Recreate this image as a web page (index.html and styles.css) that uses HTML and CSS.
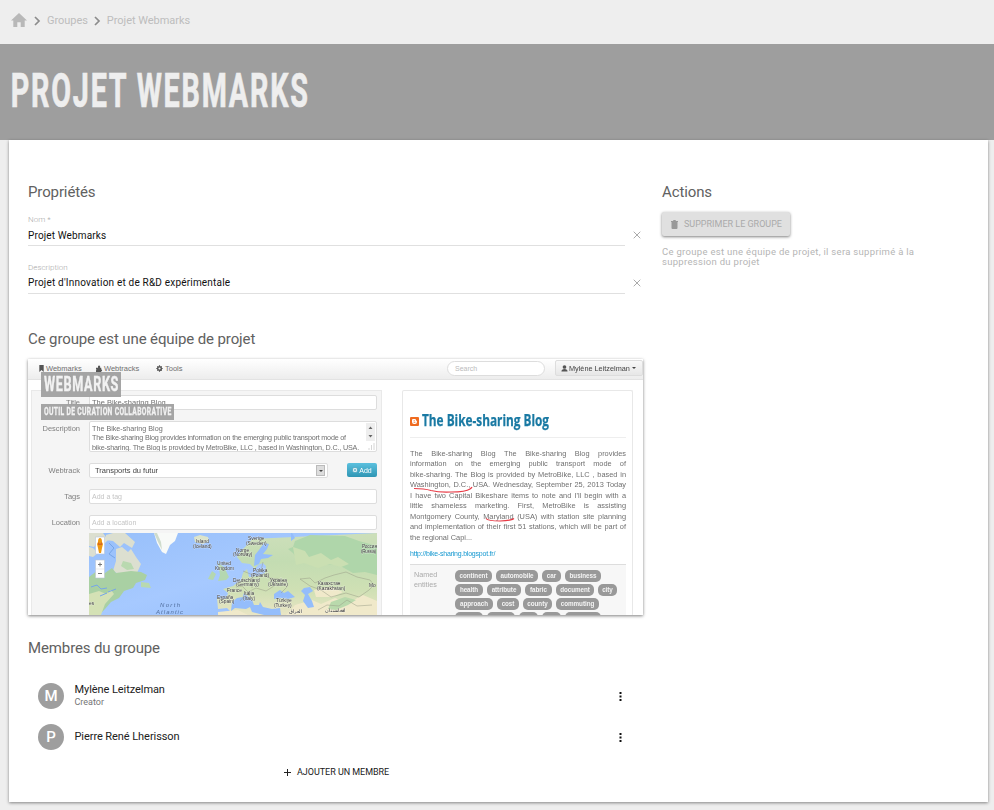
FILE: index.html
```html
<!DOCTYPE html>
<html lang="fr">
<head>
<meta charset="utf-8">
<title>Projet Webmarks</title>
<link rel="stylesheet" href="styles.css">
</head>
<body>
<nav class="crumbs">
  <svg class="home" viewBox="0 0 16 14"><path d="M8 0 0 7.5h2.3V14h4V9.2h3.4V14h4V7.5H16z"/></svg>
  <svg class="chev" viewBox="0 0 7 10"><path d="m1 1 4 4-4 4"/></svg>
  <span class="c1">Groupes</span>
  <svg class="chev" viewBox="0 0 7 10"><path d="m1 1 4 4-4 4"/></svg>
  <span class="c2">Projet Webmarks</span>
</nav>
<header class="hero">
  <h1><svg class="hero-title" viewBox="0 0 310 50"><text x="0.7" y="35" textLength="299" lengthAdjust="spacingAndGlyphs">PROJET WEBMARKS</text></svg></h1>
</header>
<main class="card">
  <div class="left">
    <h2>Propriétés</h2>
    <div class="field f1">
      <div class="control"><label>Nom *</label><span class="value v1">Projet Webmarks</span></div>
      <svg class="clear" viewBox="0 0 8 8"><path d="m.7.7 6.6 6.6M7.3.7.7 7.3"/></svg>
    </div>
    <div class="field f2">
      <div class="control"><label class="l2">Description</label><span class="value v2">Projet d'Innovation et de R&amp;D expérimentale</span></div>
      <svg class="clear" viewBox="0 0 8 8"><path d="m.7.7 6.6 6.6M7.3.7.7 7.3"/></svg>
    </div>
    <h2 class="team">Ce groupe est une équipe de projet</h2>
    <section class="preview">
      <div class="shot">
        <div class="topbar">
          <span class="nav n1"><svg viewBox="0 0 8 8"><path d="M1.5 0h5v8L4 5.8 1.5 8z"/></svg>Webmarks</span>
          <span class="nav n2"><svg viewBox="0 0 8 8"><path d="M0 3h2.3V1.5a1.3 1.3 0 0 1 2.4 0V3H6v2a1 1 0 1 1 0 2v1H0V6l1-.5L0 5z"/></svg>Webtracks</span>
          <span class="nav n3"><svg class="gear" viewBox="0 0 8 8"><circle class="ring" cx="4" cy="4" r="2.1"/><path class="teeth" d="M4 .4v1M4 6.600v1M.4 4h1M6.600 4h1M1.500 1.500l.7.7M5.800 5.800l.7.7M1.500 6.500l.7-.7M5.800 2.200l.7-.7"/></svg>Tools</span>
          <span class="search">Search</span>
          <span class="user"><svg viewBox="0 0 8 8"><circle cx="4" cy="2.3" r="2.1"/><path d="M.5 7.5q0-3 3.5-3t3.5 3z"/></svg><span>Mylène Leitzelman</span><i class="caret"></i></span>
        </div>
        <div class="columns">
          <div class="form">
            <div class="row r-title"><b>Title</b><span class="input">The Bike-sharing Blog</span></div>
            <div class="row r-desc"><b>Description</b>
              <div class="input area"><p>The Bike-sharing Blog</p><p class="a2">The Bike-sharing Blog provides information on the emerging public transport mode of</p><p class="a3">bike-sharing. The Blog is provided by MetroBike, LLC , based in Washington, D.C., USA.</p>
                <svg class="scroll" viewBox="0 0 10 28"><path class="track" d="M1 0h9v18H1z"/><path d="m3.5 6 2-2.5 2 2.5zM3.5 12l2 2.5 2-2.5z"/><path class="grip" d="M9 20v7M6.5 22v5M4 25v2"/></svg></div></div>
            <div class="row r-track"><b>Webtrack</b><span class="input select"><span>Transports du futur</span><i class="drop"><i class="caret"></i></i></span><span class="add"><svg viewBox="0 0 8 8"><circle cx="4" cy="4" r="3.6"/><path d="M4 2v4M2 4h4"/></svg>Add</span></div>
            <div class="row r-tags"><b>Tags</b><span class="input hint">Add a tag</span></div>
            <div class="row r-loc"><b>Location</b><span class="input hint">Add a location</span></div>
            <svg class="map" viewBox="0 0 288 82">
              <defs>
                <linearGradient id="sea" x1="0" y1="0" x2="1" y2="1"><stop offset="0" stop-color="#97bffa"/><stop offset=".5" stop-color="#a6c9ff"/><stop offset="1" stop-color="#94bdfb"/></linearGradient>
                <linearGradient id="land" x1="0" y1="0" x2="0" y2="1"><stop offset="0" stop-color="#cddfba"/><stop offset=".35" stop-color="#c3dcb2"/><stop offset=".7" stop-color="#cfe0b4"/><stop offset="1" stop-color="#e9e5c4"/></linearGradient>
              </defs>
              <path fill="url(#sea)" d="M0 0h288v82H0z"/>
              <path fill="#dcdfd0" d="M0 0h14l5 7-5 5-6-3-3 5-5-1zM17 2l7-2h12l10 9-3 6-8-5-4 4-7-6-7-1zM27 16l6-2 6 5 3-3 5 8 5 7-4 9-10-1-5 4-9-5 3-10zM0 14l4 1 5 5-5 4-4-1z"/>
              <path fill="#a9d0a3" d="M0 44l9-7 7 3 7-5 4 5 15-2 10 1 6 3-2 5-9 3-3 5-9 3-5 7-8 4-6 7-6 6H0z"/>
              <path fill="#d4e1b5" d="M0 61l10-3 7 3 5-4 3 4-9 10-4 11H0z"/>
              <path fill="#b9d9b0" d="m52 49 8 1 2 5-10-1zM34 28l8 2 3 6-7 1-6-4z"/>
              <path fill="none" stroke="#76a6e8" d="m2 54 6-2 4 4 6-1M11 63l7-3M19 59l8-3M20 10l5 5-5 6 6 4"/>
              <path fill="#f8faf8" d="M65 0h24l-3 8-5 4-4 9-4-2-5-9z"/><path fill="#cfdccc" d="m65 0 4 9 4 8-1-8-4-9z"/>
              <path fill="#dce4ca" d="m105 4 6-2 8 2 1 4-6 3-8-2z"/>
              <path fill="url(#land)" d="M288 0v82H129v-2l12-2-3-3-9 1-1-11 9 1 2-6-5-4 10-3 8-6 2-7 4-4 2 8 9-1 7-3 1-7-3-3-5 2-3 4-5-5-8-1-5-6 5-7 5-5 5-6z"/>
              <path fill="#b4d7b0" d="m129 30 6 4 5 10-3 3-8 1 2-6zM123 38l4 3-3 6-5-1z"/>
              <path fill="#afd6aa" d="m206 8 15-6 35 1 14 5 18 5v29l-12-3-12 1-16-9-17 1-8-6-14 1-5-7-5-4 5-2z"/>
              <path fill="#cadfb2" d="m204 14 12 4 4 6 12-4 10 7 7-3 11 7-8 3-11-3-12 4-14-5-8 2z"/>
              <path fill="#f0e9ca" d="m206 72 17-5 9 4 14-6 13 5 15-8 14 6v14h-91zM225 57l17-3 12 5-10 5h-17zM129 79l20-2 10 5h-30z"/>
              <path fill="#b9d9ac" d="m242 69 14-5 11 3-8 5-12 5-8-1z"/>
              <path fill="#94bdfb" d="m175 10 5 1-2 5-4 5 10 1-5 3-7 1-2 5-5 2 1-11 4-5zM143 69l5-4 6-1 7 10-4 2-11-1-4 3zM155 60l8 7 2 5 5 0 1-3 3 5 9 2 8-1 1 7h-17l-12-3-2-5-8-8zM185 61l6-4 4 3 4-2 7 6-7 2-8-1-6 1zM215 55l6-1 3 4-5 3 4 7 2 6-6 1-5-7 2-6-4-4zM203 0l3 5-4 3v-8z"/>
              <path fill="none" stroke="#999c87" stroke-width=".5" d="m154 38 10 4 8-4 9 7 4 8-8 5-10-3-8 4-6-6-6 1M164 42l-1 13M172 38l2-9M181 45l9 1 8 8-6 6M211 46l10-1 5 5 10-5 9-3 12-3 11 5 13 3 4 5-5 5-10 7-13-4-15 4-10-7-11-4zM229 77l9-5 12 1 8-6 10 6 15-1M151 68l6-7 5 2M177 17"/>
              <g class="cities">
                <text x="107" y="10">Island</text><text x="104" y="14.5">(Iceland)</text>
                <text x="128" y="32">United</text><text x="126" y="36.5">Kingdom</text>
                <text x="147" y="18.500">Norge</text><text x="144" y="23">(Norway)</text>
                <text x="159" y="6.5">Sverige</text><text x="157" y="11.5">(Sweden)</text>
                <text x="164" y="39">Polska</text><text x="162" y="43.500">(Poland)</text>
                <text x="144" y="48.500">Deutschland</text><text x="147" y="53">(Germany)</text>
                <text x="138" y="58.500">France</text><text x="128" y="65.500">España</text><text x="130" y="70">(Spain)</text>
                <text x="155" y="62">Italia</text><text x="154" y="66.500">(Italy)</text>
                <text x="181" y="48.500">Україна</text><text x="179" y="53">(Ukraine)</text>
                <text x="187" y="69">Türkiye</text><text x="185" y="74">(Turkey)</text>
                <text x="229" y="52">Казахстан</text><text x="228" y="56.500">(Kazakhstan)</text>
                <text x="273" y="14.5" textLength="15">Россия</text><text x="272" y="19.5" textLength="15">(Russia)</text><text x="280" y="54">Мо</text><text x="0" y="71.500">es</text>
                <text x="200" y="80">العراق</text><text x="236" y="79">افغانستان</text>
              </g>
              <g class="ocean"><text x="71" y="74" textLength="20">North</text><text x="67" y="80.500" textLength="27">Atlantic</text></g>
              <path fill="#fff" stroke="#b9c5d5" stroke-width=".6" d="M6.5 4h9v17h-9zM6.5 27h9v18h-9z"/>
              <path fill="#ee9910" d="M9 9q0-4 2-4t2 4l1 2-1 4-1 5h-2l-1-5-1-4z"/><path fill="#d66723" d="m9 9 2 2 2-2v3H9z"/>
              <path fill="none" stroke="#777" d="M9 31.5h4M11 29.5v4M9 40.5h4"/><path stroke="#ddd" stroke-width=".6" d="M7 36h8"/>
            </svg>
          </div>
          <article class="blog">
            <h3><svg class="blogger" viewBox="0 0 9 9"><rect width="9" height="9" rx="1"/><path class="mark" d="M3 2h2q1.200 0 1.200 1.500.8.400.8 1.200 0 2.300-2 2.300H4Q2 7 2 5V3.300Q2 2 3 2z"/><path class="slit" d="M3.600 3.700h1.200M3.600 5.300h1.800"/></svg><svg class="blog-title" viewBox="0 0 128 20"><text x="0" y="15.500" textLength="127" lengthAdjust="spacingAndGlyphs">The Bike-sharing Blog</text></svg></h3>
            <div class="story">
              <p>The Bike-sharing Blog The Bike-sharing Blog provides</p><p>information on the emerging public transport mode of</p><p>bike-sharing. The Blog is provided by MetroBike, LLC , based in</p><p>Washington, D.C., USA. Wednesday, September 25, 2013 Today</p><p>I have two Capital Bikeshare items to note and I'll begin with a</p><p>little shameless marketing. First, MetroBike is assisting</p><p>Montgomery County, Maryland (USA) with station site planning</p><p>and implementation of their first 51 stations, which will be part of</p><p class="last">the regional Capi...</p>
              <svg class="marks" viewBox="0 0 216 95"><path d="M4 39.500q10 0 17 2 8 2 20 1.500 15 0 19-3 1.500-1 2-2M76 69.500q2 2.500 14 2.500 12-.5 14-2.500"/></svg>
            </div>
            <a>http://bike-sharing.blogspot.fr/</a>
            <div class="entities"><div class="ent-label">Named<br>entities</div>
              <div class="tags">
                <div><span class="w37">continent</span><span class="w42">automobile</span><span class="w19">car</span><span class="w36">business</span></div>
                <div><span class="w28">health</span><span class="w34">attribute</span><span class="w27">fabric</span><span class="w38">document</span><span class="w19">city</span></div>
                <div><span class="w38">approach</span><span class="w22">cost</span><span class="w29">county</span><span class="w43">commuting</span></div>
                <div><span class="w28"></span><span class="w28"></span><span class="w19"></span><span class="w19"></span><span class="w36"></span></div>
              </div>
            </div>
          </article>
        </div>
      </div>
      <div class="captions">
        <svg class="cap1" viewBox="0 0 80 25"><text x="3" y="18.800" textLength="75" lengthAdjust="spacingAndGlyphs">WEBMARKS</text></svg>
        <svg class="cap2" viewBox="0 0 133 16"><text x="3" y="11.300" textLength="127.500" lengthAdjust="spacingAndGlyphs">OUTIL DE CURATION COLLABORATIVE</text></svg>
      </div>
    </section>
    <h2 class="members-title">Membres du groupe</h2>
    <ul class="members">
      <li><span class="avatar">M</span><div class="who"><span class="name">Mylène Leitzelman</span><small>Creator</small></div><svg class="more" viewBox="0 0 3 9"><path d="M.5 0h2v2h-2zM.5 3.500h2v2h-2zM.5 7h2v2h-2z"/></svg></li>
      <li><span class="avatar">P</span><div class="who"><span class="name n-p">Pierre René Lherisson</span></div><svg class="more" viewBox="0 0 3 9"><path d="M.5 0h2v2h-2zM.5 3.500h2v2h-2zM.5 7h2v2h-2z"/></svg></li>
    </ul>
    <div class="add-member"><svg viewBox="0 0 7 7"><path d="M3.500 0v7M0 3.500h7"/></svg><span>AJOUTER UN MEMBRE</span></div>
  </div>
  <aside class="right">
    <h2>Actions</h2>
    <button class="delete" disabled><svg viewBox="0 0 7 9"><path d="M0 1h2l.5-1h2L5 1h2v1H0zM.5 2h6v6q0 1-1 1h-4q-1 0-1-1z"/></svg><span>SUPPRIMER LE GROUPE</span></button>
    <p class="note"><span>Ce groupe est une équipe de projet, il sera supprimé à la</span><br><span class="note2">suppression du projet</span></p>
  </aside>
</main>
</body>
</html>
```
FILE: styles.css
```css
* { box-sizing: border-box; }
body { margin: 0; height: 810px; overflow: hidden; background: #eee; font-family: Roboto, sans-serif; color: #212121; }
h1, h2, h3, p, ul { margin: 0; padding: 0; font-weight: 400; }
svg { display: block; flex: none; }

.crumbs { height: 44px; padding: 0 0 4px 11px; display: flex; align-items: center; font-size: 11px; letter-spacing: -.04px; color: #bdbdbd; }
.home { width: 16px; height: 14px; fill: #b8b8b8; }
.chev { width: 7px; height: 10px; margin: 2px 6px 0 6px; fill: none; stroke: #8c8c8c; stroke-width: 1.7; }
.home + .chev { margin-left: 7px; }

.hero { height: 96px; background: #9e9e9e; padding: 28px 0 0 10px; }
.hero-title { width: 310px; height: 50px; overflow: visible; font: 700 48px Roboto, sans-serif; fill: #eee; stroke: #eee; stroke-width: .7; letter-spacing: 3px; }

.card { height: 662px; margin: 0 6px 0 9px; padding: 42px 0 0 19px; background: #fff; box-shadow: 0 1px 3px rgba(0,0,0,.45); display: grid; grid-template-columns: 615px 1fr; column-gap: 19px; align-content: start; }
h2 { font-size: 15px; line-height: 20px; color: #616161; letter-spacing: -.12px; }
.field { display: flex; gap: 8px; height: 48px; align-items: flex-start; }
.f1 { margin-top: 9px; height: 45px; }
.f2 { margin-top: 3px; }
.control { width: 597px; height: 35px; border-bottom: 1px solid #e0e0e0; display: flex; flex-direction: column; padding-top: 1px; }
label { font-size: 8px; font-weight: 300; line-height: 16px; color: #aaa; }
.value { font-size: 10px; line-height: 16px; color: #111; letter-spacing: .14px; }
.v2 { margin-top: -1px; letter-spacing: .19px; }
.clear { width: 8px; height: 8px; margin-top: 20px; fill: none; stroke: #aaa; stroke-width: 1; }
.team { margin-top: 22px; }

.preview { height: 256px; margin-top: 10px; position: relative; background: #fff; box-shadow: 0 1px 3px rgba(0,0,0,.5); }
.shot { height: 256px; overflow: hidden; font-family: "Liberation Sans", sans-serif; font-size: 7.5px; color: #707070; filter: blur(.35px); }
.topbar { height: 21px; display: flex; align-items: center; background: linear-gradient(#fff, #ededed); border-bottom: 1px solid #e3e3e3; padding: 0 0 2px 10px; }
.nav { display: flex; align-items: center; gap: 1px; }
.nav svg, .user svg { width: 7px; height: 7px; fill: #555; }
.nav .ring { fill: none; stroke: #555; stroke-width: 1.7; }
.nav .teeth { stroke: #555; stroke-width: 1.3; }
.nav .gear { margin-right: 1px; }
.n1 { width: 58px; } .n2 { width: 60px; } .n3 { width: 291px; }
.search { width: 98px; height: 15px; border: 1px solid #ddd; border-radius: 8px; background: #fff; color: #bbb; padding: 3px 7px; line-height: 8px; font-size: 7px; }
.user { margin-left: 10px; width: 88px; height: 16px; display: flex; align-items: center; gap: 1px; background: linear-gradient(#f8f8f8, #e7e7e7); border: 1px solid #ddd; border-radius: 2px; padding-left: 5px; font-size: 7.3px; color: #444; white-space: nowrap; }
.caret { border: 2px solid transparent; border-top-color: #444; border-bottom: 0; margin-left: 1px; }
.columns { display: flex; gap: 20px; padding: 10px 10px 0 3px; }
.form { width: 351px; height: 226px; padding: 4px 4px 0 1px; background: #f5f5f5; border: 1px solid #e9e9e9; border-bottom: 0; display: flex; flex-direction: column; }
.row { display: flex; flex: none; }
.row b { width: 47px; margin-right: 9px; text-align: right; font-weight: 400; line-height: 15px; color: #808080; }
.input { width: 288px; height: 15px; border: 1px solid #ddd; border-radius: 2px; background: #fff; padding: 0 2px; line-height: 14px; white-space: nowrap; }
.r-title { height: 26px; }
.r-desc { height: 42px; }
.area { height: 31px; line-height: 9.3px; padding-top: 2px; position: relative; overflow: hidden; font-size: 7.2px; }
.a2 { letter-spacing: -.2px; } .a3 { letter-spacing: -.17px; }
.scroll { position: absolute; right: 1px; top: 1px; width: 10px; height: 28px; fill: #666; }
.track { fill: #eee; } .grip { stroke: #ccc; stroke-width: .8; }
.r-track { height: 26px; }
.select { width: 239px; display: flex; justify-content: space-between; align-items: center; padding-left: 5px; font-size: 7.5px; color: #444; }
.drop { width: 9px; height: 11px; border: 1px solid #bbb; background: #ddd; display: flex; align-items: center; justify-content: center; }
.drop .caret { margin: 0; }
.add { width: 30px; height: 14px; margin-left: 19px; border-radius: 2px; background: linear-gradient(#5bc0de, #2f96b4); color: #fff; display: flex; align-items: center; justify-content: center; gap: 1px; font-size: 7px; }
.add svg { width: 6px; height: 6px; fill: #fff; stroke: #3599b6; }
.r-tags { height: 26px; } .r-loc { height: 18px; }
.hint { color: #c4c4c4; font-size: 7px; }
.map { width: 288px; height: 82px; margin-left: 56px; overflow: hidden; }
.cities { font: 4.8px "Liberation Sans", sans-serif; fill: #333; stroke: #fff; stroke-width: .5; stroke-opacity: .6; paint-order: stroke; }
.ocean { font: italic 6px "Liberation Sans", sans-serif; fill: #526f9e; }

.blog { width: 231px; height: 226px; padding: 0 6px 0 7px; border: 1px solid #e8e8e8; border-bottom: 0; border-radius: 2px; background: #fff; }
.blog h3 { display: flex; align-items: center; gap: 3px; height: 47px; padding-top: 12px; border-bottom: 1px solid #eee; }
.blogger { width: 9px; height: 9px; margin-top: 2px; fill: #ef6b20; }
.blogger .mark { fill: #fff; }
.blogger .slit { stroke: #ef6b20; stroke-width: .8; }
.blog-title { width: 128px; height: 20px; overflow: visible; font: 700 16px "Open Sans", sans-serif; fill: #1979a3; stroke: #1979a3; stroke-width: .25; }
.story { position: relative; margin-top: 11px; line-height: 10.45px; font-size: 7.4px; }
.story p { height: 10.45px; text-align-last: justify; white-space: nowrap; }
.story .last { text-align-last: left; }
.marks { position: absolute; left: 0; top: 0; width: 216px; height: 95px; fill: none; stroke: #e83b46; stroke-width: 1.2; }
.blog a { display: block; margin-top: 5px; line-height: 11px; color: #1598d0; font-size: 7px; letter-spacing: -.22px; }
.entities { height: 54px; margin-top: 5px; display: flex; background: #f7f7f7; border-top: 1px solid #ddd; padding: 5px 0 0 4px; color: #aaa; font-size: 7.2px; line-height: 10.500px; }
.ent-label { width: 41px; }
.tags { display: flex; flex-direction: column; gap: 2px; }
.tags div { display: flex; gap: 4px; height: 12px; }
.tags span { flex: none; height: 12px; border-radius: 5px; background: #999; color: #f4f4f4; font-weight: 700; font-size: 6.300px; line-height: 11.500px; text-align: center; white-space: nowrap; letter-spacing: -.05px; }
.w19 { width: 19px; } .w22 { width: 22px; } .w27 { width: 27px; } .w28 { width: 28px; } .w29 { width: 29px; } .w34 { width: 34px; } .w36 { width: 36px; } .w37 { width: 37px; } .w38 { width: 38px; } .w42 { width: 42px; } .w43 { width: 43px; }

.captions { position: absolute; left: 13px; top: 13px; display: flex; flex-direction: column; gap: 7px; }
.captions svg { background: rgba(158,158,158,.93); fill: #f2f2f2; stroke: #f2f2f2; font-family: Roboto, sans-serif; font-weight: 700; overflow: visible; }
.cap1 { width: 80px; height: 25px; font-size: 20px; letter-spacing: 1px; stroke-width: .4; }
.cap2 { width: 133px; height: 16px; font-size: 11px; letter-spacing: .5px; stroke-width: .3; }

.members-title { margin-top: 23px; }
.members { list-style: none; margin-top: 17px; padding: 0 21px 0 10px; }
.members li { height: 41px; display: flex; align-items: center; }
.avatar { width: 26px; height: 26px; border-radius: 50%; background: #9e9e9e; color: #fff; font-size: 15px; font-weight: 500; line-height: 26px; text-align: center; }
.who { flex: 1; margin-left: 10.500px; display: flex; flex-direction: column; }
.name { font-size: 11px; line-height: 13px; letter-spacing: -.07px; }
.who small { font-size: 9px; line-height: 12px; color: #757575; }
.more { width: 3px; height: 9px; fill: #111; margin-top: 2px; }
.add-member { margin: 8px 0 0 256px; display: flex; gap: 6px; align-items: center; font-size: 9px; line-height: 14px; letter-spacing: -.03px; }
.add-member svg { width: 7px; height: 7px; stroke: #222; stroke-width: 1; }

.delete { width: 128px; height: 24px; margin: 10px 0 0 0; padding: 0 0 0 9px; display: flex; align-items: center; gap: 6px; border: 0; border-radius: 2px; background: #e0e0e0; box-shadow: 0 1px 3px rgba(0,0,0,.5); font: 9px Roboto, sans-serif; color: #aaa; }
.delete svg { width: 7px; height: 9px; fill: #999; }
.note { margin-top: 11px; font-size: 9.500px; line-height: 10px; color: #b5b5b5; letter-spacing: .3px; white-space: nowrap; }
```
